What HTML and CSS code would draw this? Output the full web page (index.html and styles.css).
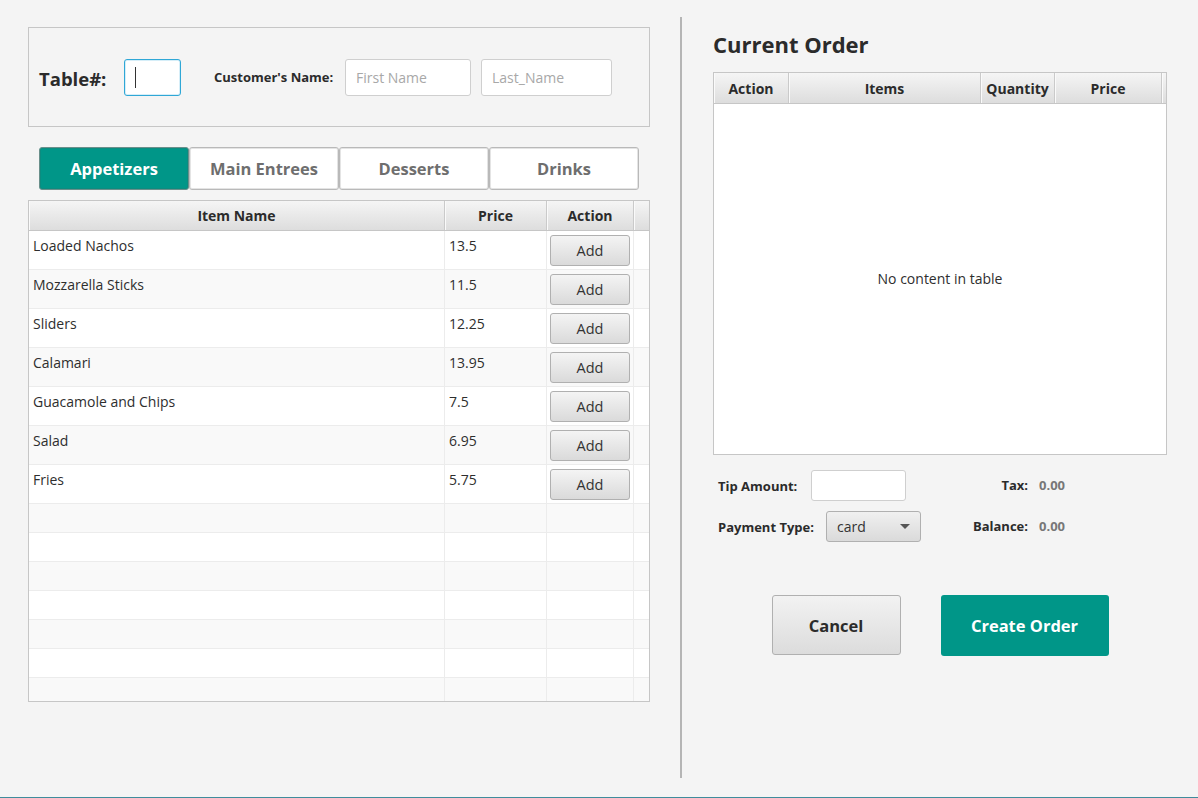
FILE: index.html
```html
<!DOCTYPE html>
<html>
<head>
<meta charset="utf-8">
<link rel="stylesheet" href="styles.css">
</head>
<body>
<div class="app">
  <section class="left">
    <div class="info-box">
      <label class="table-label">Table#:</label>
      <div class="field field-table focused"><span class="caret"></span></div>
      <label class="cust-label">Customer's Name:</label>
      <div class="field field-first"><span class="ph">First Name</span></div>
      <div class="field field-last"><span class="ph">Last_Name</span></div>
    </div>

    <div class="tabs">
      <button class="tab active">Appetizers</button>
      <button class="tab">Main Entrees</button>
      <button class="tab">Desserts</button>
      <button class="tab">Drinks</button>
    </div>

    <div class="menu-table">
      <div class="thead mrow">
        <div class="th">Item Name</div>
        <div class="th">Price</div>
        <div class="th">Action</div>
        <div class="th filler"></div>
      </div>
      <div class="tbody">
        <div class="mrow drow"><div class="td">Loaded Nachos</div><div class="td">13.5</div><div class="td act"><button class="add">Add</button></div><div class="td filler"></div></div>
        <div class="mrow drow"><div class="td">Mozzarella Sticks</div><div class="td">11.5</div><div class="td act"><button class="add">Add</button></div><div class="td filler"></div></div>
        <div class="mrow drow"><div class="td">Sliders</div><div class="td">12.25</div><div class="td act"><button class="add">Add</button></div><div class="td filler"></div></div>
        <div class="mrow drow"><div class="td">Calamari</div><div class="td">13.95</div><div class="td act"><button class="add">Add</button></div><div class="td filler"></div></div>
        <div class="mrow drow"><div class="td">Guacamole and Chips</div><div class="td">7.5</div><div class="td act"><button class="add">Add</button></div><div class="td filler"></div></div>
        <div class="mrow drow"><div class="td">Salad</div><div class="td">6.95</div><div class="td act"><button class="add">Add</button></div><div class="td filler"></div></div>
        <div class="mrow drow"><div class="td">Fries</div><div class="td">5.75</div><div class="td act"><button class="add">Add</button></div><div class="td filler"></div></div>
        <div class="mrow erow"><div class="td"></div><div class="td"></div><div class="td"></div><div class="td filler"></div></div>
        <div class="mrow erow"><div class="td"></div><div class="td"></div><div class="td"></div><div class="td filler"></div></div>
        <div class="mrow erow"><div class="td"></div><div class="td"></div><div class="td"></div><div class="td filler"></div></div>
        <div class="mrow erow"><div class="td"></div><div class="td"></div><div class="td"></div><div class="td filler"></div></div>
        <div class="mrow erow"><div class="td"></div><div class="td"></div><div class="td"></div><div class="td filler"></div></div>
        <div class="mrow erow"><div class="td"></div><div class="td"></div><div class="td"></div><div class="td filler"></div></div>
        <div class="mrow erow"><div class="td"></div><div class="td"></div><div class="td"></div><div class="td filler"></div></div>
      </div>
    </div>
  </section>

  <div class="divider"></div>

  <section class="right">
    <h1 class="title">Current Order</h1>
    <div class="order-table">
      <div class="thead orow">
        <div class="th">Action</div>
        <div class="th">Items</div>
        <div class="th">Quantity</div>
        <div class="th">Price</div>
        <div class="th filler"></div>
      </div>
      <div class="empty">No content in table</div>
    </div>

    <div class="summary">
      <div class="srow">
        <div class="sleft">
          <label class="slabel tip-label">Tip Amount:</label>
          <div class="field field-tip"></div>
        </div>
        <div class="sright">
          <span class="rlabel">Tax:</span>
          <span class="rvalue">0.00</span>
        </div>
      </div>
      <div class="srow srow2">
        <div class="sleft">
          <label class="slabel pay-label">Payment Type:</label>
          <div class="combo"><span>card</span><span class="arrow"></span></div>
        </div>
        <div class="sright">
          <span class="rlabel">Balance:</span>
          <span class="rvalue">0.00</span>
        </div>
      </div>
    </div>

    <div class="actions">
      <button class="btn cancel">Cancel</button>
      <button class="btn create">Create Order</button>
    </div>
  </section>
</div>
</body>
</html>
```

FILE: styles.css
```css
* { box-sizing: border-box; }
html, body { margin: 0; padding: 0; }
body {
  background: #f4f4f4;
  font-family: "Open Sans", "Liberation Sans", sans-serif;
  color: #333;
  width: 1198px;
  height: 798px;
  overflow: hidden;
}
.app {
  display: flex;
  height: 798px;
  border-bottom: 1px solid #3f8c9c;
}
.left {
  width: 650px;
  padding: 27px 0 0 28px;
}
.info-box {
  width: 622px;
  height: 100px;
  border: 1px solid #c6c6c6;
  display: flex;
  align-items: center;
  padding-left: 10px;
}
.table-label {
  width: 85px;
  font-size: 18.5px;
  font-weight: 700;
  color: #2b2b2b;
  margin-top: 3px;
}
.field {
  height: 37px;
  background: #fff;
  border: 1px solid #cfcfcf;
  border-radius: 3px;
  display: flex;
  align-items: center;
  padding-left: 10px;
}
.field-table {
  width: 57px;
  border: 1px solid #2fa7d6;
  box-shadow: inset 0 0 0 1px #d6eef8;
}
.caret {
  display: block;
  width: 1px;
  height: 21px;
  background: #333;
}
.cust-label {
  width: 131px;
  margin-left: 33px;
  font-size: 13px;
  font-weight: 700;
  color: #2b2b2b;
}
.field-first { width: 126px; }
.field-last { width: 131px; margin-left: 10px; }
.ph {
  font-size: 14px;
  color: #a8a8a8;
}
.tabs {
  display: flex;
  margin: 20px 0 0 11px;
}
.tab {
  width: 150px;
  height: 43px;
  background: #fff;
  border: 1px solid #b9b9b9;
  box-shadow: inset 0 0 0 1px #e4e4e4;
  border-radius: 3px;
  font-family: inherit;
  font-size: 16.5px;
  font-weight: 700;
  color: #6e6e6e;
  padding: 0;
}
.tab.active {
  background: #009688;
  color: #fff;
  border-color: #6a8f8b;
  box-shadow: inset 0 0 0 1px #0c8c80;
}
.menu-table {
  margin-top: 10px;
  width: 622px;
  height: 502px;
  border: 1px solid #c6c6c6;
  background: #fff;
  overflow: hidden;
}
.mrow {
  display: grid;
  grid-template-columns: 416px 102px 87px 1fr;
}
.thead {
  height: 30px;
  background: linear-gradient(#f5f5f5, #dddddd);
  border-bottom: 1px solid #c6c6c6;
}
.th {
  font-size: 14px;
  font-weight: 700;
  color: #2b2b2b;
  display: flex;
  align-items: center;
  justify-content: center;
  border-right: 1px solid #cacaca;
  box-shadow: inset 1px 0 0 #fafafa;
}
.th.filler { border-right: none; }
.drow { height: 39px; }
.erow { height: 29px; }
.tbody .mrow:nth-child(odd) { background: #fff; }
.tbody .mrow:nth-child(even) { background: #f9f9f9; }
.tbody .mrow { border-bottom: 1px solid #ececec; }
.td {
  border-right: 1px solid #ececec;
  font-size: 14px;
  color: #2e2e2e;
  padding: 5px 0 0 4px;
}
.td.filler { border-right: none; }
.td.act { padding: 4px 0 0 3px; }
.add {
  width: 80px;
  height: 31px;
  border: 1px solid #b0b0b0;
  border-radius: 3px;
  background: linear-gradient(#f4f4f4, #dadada);
  font-family: inherit;
  font-size: 14.5px;
  color: #333;
  padding: 0;
}
.divider {
  width: 2px;
  margin: 17px 0 20px 30px;
  background: #b5b5b5;
  height: 761px;
}
.right {
  padding: 0 0 0 31px;
  width: 485px;
}
.title {
  margin: 29px 0 0 0;
  font-size: 22px;
  font-weight: 700;
  color: #2b2b2b;
  line-height: 30px;
  height: 43px;
}
.order-table {
  width: 454px;
  height: 383px;
  border: 1px solid #c6c6c6;
  background: #fff;
  display: flex;
  flex-direction: column;
}
.orow {
  display: grid;
  grid-template-columns: 75px 192px 74px 107px 1fr;
  height: 31px;
}
.empty {
  flex: 1;
  display: flex;
  align-items: center;
  justify-content: center;
  font-size: 14px;
  color: #2e2e2e;
  padding-bottom: 1px;
}
.summary {
  margin-top: 15px;
  padding-left: 5px;
}
.srow {
  display: flex;
  align-items: center;
  height: 31px;
}
.srow2 { margin-top: 10px; }
.sleft {
  width: 240px;
  display: flex;
  align-items: center;
}
.slabel {
  font-size: 13px;
  font-weight: 700;
  color: #2b2b2b;
}
.tip-label { width: 93px; }
.pay-label { width: 108px; }
.field-tip { width: 95px; height: 31px; }
.combo {
  width: 95px;
  height: 31px;
  border: 1px solid #b0b0b0;
  border-radius: 3px;
  background: linear-gradient(#f0f0f0, #dadada);
  display: flex;
  align-items: center;
  justify-content: space-between;
  padding: 0 10px 0 10px;
  font-size: 14px;
  color: #333;
}
.arrow {
  width: 0;
  height: 0;
  border-left: 5px solid transparent;
  border-right: 5px solid transparent;
  border-top: 5px solid #555;
}
.sright {
  display: flex;
  align-items: center;
  margin-top: -2px;
}
.rlabel {
  width: 70px;
  text-align: right;
  font-size: 13px;
  font-weight: 700;
  color: #2b2b2b;
}
.rvalue {
  margin-left: 11px;
  font-size: 13px;
  font-weight: 700;
  color: #777;
}
.actions {
  width: 454px;
  display: flex;
  justify-content: center;
  gap: 40px;
  margin-top: 53px;
}
.btn {
  height: 60px;
  border-radius: 3px;
  font-family: inherit;
  font-size: 16.5px;
  font-weight: 700;
  padding: 0;
}
.cancel {
  width: 129px;
  border: 1px solid #b0b0b0;
  background: linear-gradient(#f2f2f2, #dcdcdc);
  color: #2b2b2b;
}
.create {
  width: 168px;
  height: 61px;
  border: none;
  background: #009688;
  color: #fff;
}
```
